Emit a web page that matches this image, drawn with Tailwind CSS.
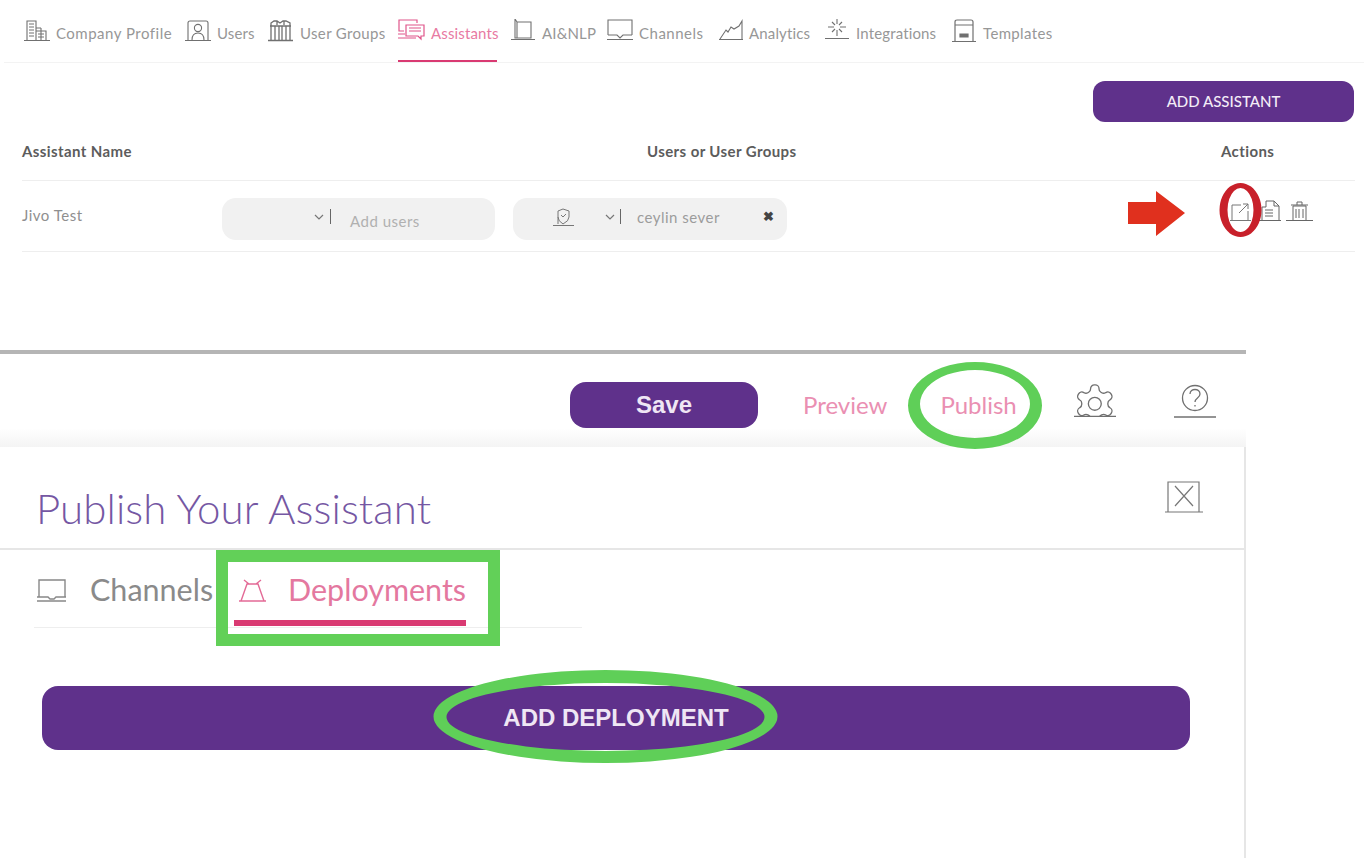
<!DOCTYPE html>
<html>
<head>
<meta charset="utf-8">
<script src="https://cdn.jsdelivr.net/npm/@tailwindcss/browser@4"></script>
</head>
<body class="bg-white font-['Lato','Liberation_Sans',sans-serif] text-[#8a8a8a] overflow-hidden">
<div class="relative w-[1364px] h-[858px] overflow-hidden">

  <!-- top nav -->
  <nav class="h-[63px] ml-[4px] border-b border-[#f3f3f3] pl-[20px] flex items-start text-[15px] tracking-[0.15px] leading-[18px] text-[#979797] [&_svg]:shrink-0 [&_span]:mt-[5px]">
    <a class="flex h-[62px] pt-[19px] gap-[6px] w-[161px]">
      <svg class="w-[26px] h-[24px]" viewBox="0 0 26 24" fill="none" stroke="#707070" stroke-width="1.1"><path d="M0 21.500h26M3 21V2h9v19M12 9h5M17 9v12M12 12h10v9M5 5h5M5 8h5M5 11h5M5 14h5M5 17h5M14 15h6M14 18h6"/></svg>
      <span class="tracking-[0.5px]">Company Profile</span>
    </a>
    <a class="flex h-[62px] pt-[19px] gap-[6px] w-[83px]">
      <svg class="w-[26px] h-[24px]" viewBox="0 0 26 24" fill="none" stroke="#707070" stroke-width="1.1"><path d="M0 21.500h26M3 21V4q0-2 2-2h16q2 0 2 2v17"/><circle cx="13" cy="9" r="3.600"/><path d="M7 21c0-5 2-7 6-7s6 2 6 7"/></svg>
      <span>Users</span>
    </a>
    <a class="flex h-[62px] pt-[19px] gap-[7px] w-[130px]">
      <svg class="w-[25px] h-[24px]" viewBox="0 0 25 24" fill="none" stroke="#707070" stroke-width="1.300"><path d="M0 21.500h25M3 21V7M7 21V7M11 21V7M14 21V7M18 21V7M22 21V7M3 7V4l3-2h3l3 2 3-2h3l4 2v3M2 7h21M9 2v4M16 2v4"/></svg>
      <span class="tracking-[0.35px]">User Groups</span>
    </a>
    <a class="flex h-[62px] pt-[19px] gap-[6px] w-[113px] relative text-[#e87aa3]">
      <svg class="w-[27px] h-[24px]" viewBox="0 0 27 24" fill="none" stroke="#e0558a" stroke-width="1.2"><path d="M19 4V1H1v11h5M8 6h18v11h-3v3l-3-3H8zM11 9h12M11 12h12M0 15h7M0 19h18"/></svg>
      <span>Assistants</span>
      <i class="absolute left-0 bottom-0 w-[99px] h-[2px] bg-[#d93a72]"></i>
    </a>
    <a class="flex h-[62px] pt-[19px] gap-[7px] w-[96px]">
      <svg class="w-[24px] h-[24px]" viewBox="0 0 24 24" fill="none" stroke="#707070" stroke-width="1.1"><path d="M0 20.500h24M4 19h16V3H6L4 0zM6 3v16"/></svg>
      <span>AI&amp;NLP</span>
    </a>
    <a class="flex h-[62px] pt-[19px] gap-[6px] w-[112px]">
      <svg class="w-[26px] h-[24px]" viewBox="0 0 26 24" fill="none" stroke="#707070" stroke-width="1.1"><path d="M1 16V1h24v15M0 20.500h26M1 16h9l3 3 3-3h9"/></svg>
      <span class="tracking-[0.5px]">Channels</span>
    </a>
    <a class="flex h-[62px] pt-[19px] gap-[6px] w-[106px]">
      <svg class="w-[24px] h-[24px]" viewBox="0 0 24 24" fill="none" stroke="#707070" stroke-width="1.1"><path d="M0 20.500h24M1 20l6-9 2 2 3-5 3 2 5-3 3-5v18"/></svg>
      <span>Analytics</span>
    </a>
    <a class="flex h-[62px] pt-[19px] gap-[7px] w-[127px]">
      <svg class="w-[24px] h-[24px]" viewBox="0 0 24 24" fill="none" stroke="#707070" stroke-width="1.1"><path d="M0 19.500h24M12 0v5M12 11v6M3 8h6M15 8h6M7 3l3 3M17 3l-3 3M7 13l3-3M17 13l-3-3"/></svg>
      <span>Integrations</span>
    </a>
    <a class="flex h-[62px] pt-[19px] gap-[7px]">
      <svg class="w-[24px] h-[24px]" viewBox="0 0 24 24" fill="none" stroke="#707070" stroke-width="1.2"><path d="M0 22.500h24M3 22V3q0-2 2-2h14q2 0 2 2v19M3 6h18"/><path d="M8 15h8v3H8z" fill="#707070"/></svg>
      <span class="tracking-[0.35px]">Templates</span>
    </a>
  </nav>

  <!-- add assistant -->
  <div class="flex justify-end pr-[10px] pt-[18px]">
    <button class="w-[261px] h-[41px] rounded-[12px] bg-[#5f318b] text-[#f3ecf7] text-[15px] font-medium">ADD ASSISTANT</button>
  </div>

  <!-- table head -->
  <div class="mt-[19px] ml-[22px] w-[1333px] h-[40px] border-b border-[#eeeeee] flex text-[15px] tracking-[0.4px] leading-[20px] font-bold text-[#5c5c5c]">
    <span class="w-[625px]">Assistant Name</span>
    <span class="w-[574px]">Users or User Groups</span>
    <span>Actions</span>
  </div>

  <!-- table row -->
  <div class="ml-[22px] w-[1333px] h-[71px] border-b border-[#eeeeee] flex items-center text-[15px] tracking-[0.5px] text-[#8f8f8f]">
    <span class="w-[200px] -mt-[1px]">Jivo Test</span>
    <div class="w-[273px] h-[42px] mt-[6px] rounded-[14px] bg-[#f1f1f1] flex items-center pl-[92px] mr-[18px]">
      <svg class="w-[10px] h-[6px] -mt-[5px]" viewBox="0 0 10 6" fill="none" stroke="#777" stroke-width="1.2"><path d="M1 1l4 4 4-4"/></svg>
      <span class="w-[1px] h-[15px] bg-[#666] ml-[6px] -mt-[5px]"></span>
      <span class="ml-[19px] mt-[5px] text-[#b0b0b0]">Add users</span>
    </div>
    <div class="w-[274px] h-[42px] mt-[6px] rounded-[14px] bg-[#f1f1f1] flex items-center pl-[40px]">
      <svg class="w-[21px] h-[18px] -mt-[4px]" viewBox="0 0 21 18" fill="none" stroke="#777" stroke-width="1"><path d="M0 17.500h21M5 16V3l5-2 6 2v6q0 4-6 7-5-3-5-7M8 7l2 2 3-3"/></svg>
      <svg class="w-[10px] h-[6px] ml-[31px] -mt-[5px]" viewBox="0 0 10 6" fill="none" stroke="#777" stroke-width="1.2"><path d="M1 1l4 4 4-4"/></svg>
      <span class="w-[1px] h-[15px] bg-[#666] ml-[5px] -mt-[5px]"></span>
      <span class="ml-[16px] -mt-[3px] text-[#9c9c9c]">ceylin sever</span>
      <span class="ml-auto mr-[13px] -mt-[5px] text-[#444] text-[13px] font-bold">✖</span>
    </div>
    <div class="ml-[441px] flex items-end h-[22px] -mt-[13px]">
      <svg class="w-[24px] h-[20px]" viewBox="0 0 24 20" fill="none" stroke="#777" stroke-width="1"><path d="M2 19.500h21M4 19V4h9M20 10v9M11 12l9-9M15 3h5v5"/></svg>
      <svg class="w-[22px] h-[21px] ml-[7px]" viewBox="0 0 22 21" fill="none" stroke="#666" stroke-width="1"><path d="M0 20.500h22M3 20V7h4V1h8l5 5v14M15 1v5h5M6 10h8M6 13h8M6 16h8"/></svg>
      <svg class="w-[27px] h-[21px] ml-[5px]" viewBox="0 0 27 21" fill="none" stroke="#666" stroke-width="1"><path d="M0 20.500h27M7 20V6h13v14M5 5h17M11 5V2h5v3M10 9v9M13 9v9M17 9v9"/></svg>
    </div>
  </div>

  <!-- lower panel -->
  <section class="mt-[98px] w-[1246px] border-t-[4px] border-[#b5b5b5]">
    <div class="h-[93px] flex items-start pl-[570px] bg-gradient-to-b from-white from-80% to-[#f4f4f4]">
      <button class="mt-[28px] w-[188px] h-[46px] rounded-[16px] bg-[#5f318b] text-[#efe6f4] text-[24px] font-bold font-['Liberation_Sans',sans-serif]">Save</button>
      <span class="mt-[34px] ml-[45px] text-[24px] leading-[34px] text-[#ea8fb2]">Preview</span>
      <span class="mt-[34px] ml-[53px] text-[24px] leading-[34px] text-[#ea8fb2]">Publish</span>
      <svg class="mt-[30px] ml-[57px] w-[42px] h-[33px]" viewBox="0 0 42 33" fill="none" stroke="#707070" stroke-width="1.300">
        <path d="M0 32.500h42"/>
        <svg x="0" y="0" width="42" height="32" viewBox="0 0 42 32">
          <g transform="translate(-2 -3) scale(1.9)" stroke-width="0.7"><path d="M12.220 2h-.44a2 2 0 0 0-2 2v.18a2 2 0 0 1-1 1.730l-.43.25a2 2 0 0 1-2 0l-.15-.08a2 2 0 0 0-2.730.73l-.22.38a2 2 0 0 0 .73 2.730l.15.1a2 2 0 0 1 1 1.720v.51a2 2 0 0 1-1 1.740l-.15.09a2 2 0 0 0-.73 2.730l.22.38a2 2 0 0 0 2.730.73l.15-.08a2 2 0 0 1 2 0l.43.25a2 2 0 0 1 1 1.730V20a2 2 0 0 0 2 2h.44a2 2 0 0 0 2-2v-.18a2 2 0 0 1 1-1.730l.43-.25a2 2 0 0 1 2 0l.15.08a2 2 0 0 0 2.730-.73l.22-.39a2 2 0 0 0-.73-2.730l-.15-.08a2 2 0 0 1-1-1.740v-.5a2 2 0 0 1 1-1.740l.15-.09a2 2 0 0 0 .73-2.730l-.22-.38a2 2 0 0 0-2.730-.73l-.15.08a2 2 0 0 1-2 0l-.43-.25a2 2 0 0 1-1-1.730V4a2 2 0 0 0-2-2z"/><circle cx="12" cy="12" r="3.400"/></g>
        </svg>
      </svg>
      <svg class="mt-[30px] ml-[58px] w-[42px] h-[34px]" viewBox="0 0 42 34" fill="none" stroke="#707070" stroke-width="1.3"><path d="M0 33h42"/><circle cx="21" cy="14" r="12.500"/><path d="M16 10c0-6 10-6 10 0 0 4-5 4-5 8M21 21v1.500"/></svg>
    </div>

    <div class="border-r-2 border-[#e6e6e6] h-[420px]">
      <div class="h-[103px] border-b-2 border-[#e6e6e6] pl-[36px] pt-[36px] relative">
        <h1 class="text-[42px] tracking-[0.1px] leading-[50px] font-light text-[#7557a3]">Publish Your Assistant</h1>
        <svg class="absolute left-[1165px] top-[32px] w-[38px] h-[34px]" viewBox="0 0 38 34" fill="none" stroke="#777" stroke-width="1.2"><path d="M0 33h38M3 33V3h31v30M10 7l18 20M28 7L10 27"/></svg>
      </div>
      <div class="ml-[34px] w-[548px] h-[78px] border-b border-[#eee] flex items-start text-[30.500px] leading-[40px] pt-[19px]">
        <svg class="mt-[9px] ml-[2px] w-[31px] h-[26px]" viewBox="0 0 31 26" fill="none" stroke="#888" stroke-width="1.4"><path d="M3 19V2h26v17M1 23h29M1 19h11l2 2h4l2-2h10"/></svg>
        <span class="ml-[23px] w-[125px] shrink-0 text-[#8a8a8a]">Channels</span>
        <div class="relative ml-[23px] flex h-[59px]">
          <svg class="mt-[9px] w-[29px] h-[26px]" viewBox="0 0 29 26" fill="none" stroke="#e36a96" stroke-width="1.4"><path d="M1 23h27M3 23L9 6h11l6 17M6 2l5 4M23 2l-5 4"/></svg>
          <span class="ml-[21px] text-[#e4789f]">Deployments</span>
          <i class="absolute left-[-4px] right-0 top-[51px] h-[6px] bg-[#d93a72]"></i>
        </div>
      </div>
      <button class="mt-[58px] ml-[42px] block w-[1148px] h-[64px] rounded-[16px] bg-[#5f318b] text-[#efe6f4] text-[24px] font-bold font-['Liberation_Sans',sans-serif]">ADD DEPLOYMENT</button>
    </div>
  </section>

  <!-- annotations (overlays) -->
  <svg class="absolute left-[1125px] top-[180px] w-[145px] h-[62px]" viewBox="0 0 145 62" fill="none">
    <path d="M3 22h28V11l29 22-29 23V44H3z" fill="#e0301e"/>
    <path fill-rule="evenodd" d="M115.500 3a21 27 0 1 0 .01 0zM115.500 8a13 22 0 1 1-.01 0z" fill="#c8202a"/>
  </svg>
  <svg class="absolute left-[900px] top-[355px] w-[150px] h-[100px]" viewBox="0 0 150 100" fill="none">
    <path fill-rule="evenodd" d="M75 7a67 43.500 0 1 0 .01 0zM75 15a55 34 0 1 1-.01 0z" fill="#5fcf58"/>
  </svg>
  <div class="absolute left-[216px] top-[550px] w-[284px] h-[96px] border-[12px] border-[#62d058]"></div>
  <svg class="absolute left-[425px] top-[660px] w-[365px] h-[115px]" viewBox="0 0 365 115" fill="none">
    <path fill-rule="evenodd" d="M180.500 10a172 46.500 0 1 0 .01 0zM180.500 23a159 34 0 1 1-.01 0z" fill="#5fcf58"/>
  </svg>
</div>
</body>
</html>
